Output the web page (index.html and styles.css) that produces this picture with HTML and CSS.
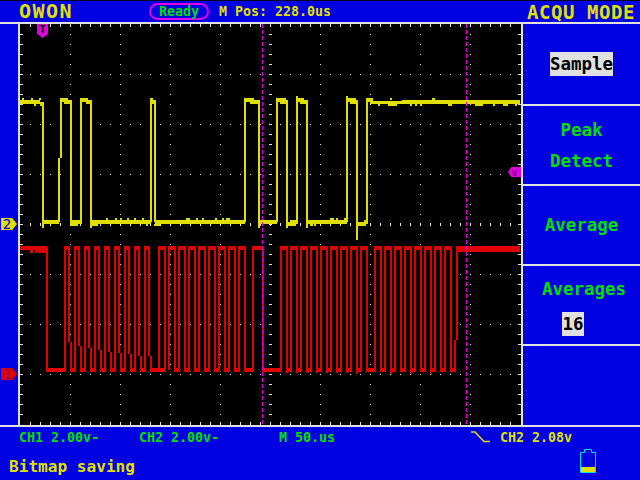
FILE: index.html
```html
<!DOCTYPE html>
<html lang="en">
<head>
  <meta charset="UTF-8">
  <title>OWON oscilloscope - ACQU MODE</title>
  <link rel="stylesheet" href="styles.css">
</head>
<body>

  <div class="scope">

    <div class="top-bar">
      <span class="logo">OWON</span>
      <span class="badge">Ready</span>
      <span class="pos">M Pos: 228.0us</span>
      <span class="menu-title">ACQU MODE</span>
    </div>

    <div class="main">
      <div class="gutter"></div>

      <div class="plot">
        <svg class="trace-view" width="501" height="401" viewBox="20 24 501 401">
          <!-- grid dots -->
          <g class="dots">
            <line x1="30" x2="520" y1="74.5" y2="74.5"/>
            <line x1="30" x2="520" y1="124.5" y2="124.5"/>
            <line x1="30" x2="520" y1="174.5" y2="174.5"/>
            <line x1="30" x2="520" y1="274.5" y2="274.5"/>
            <line x1="30" x2="520" y1="324.5" y2="324.5"/>
            <line x1="30" x2="520" y1="374.5" y2="374.5"/>
            <line x1="70.5" x2="70.5" y1="34" y2="424"/>
            <line x1="120.5" x2="120.5" y1="34" y2="424"/>
            <line x1="170.5" x2="170.5" y1="34" y2="424"/>
            <line x1="220.5" x2="220.5" y1="34" y2="424"/>
            <line x1="320.5" x2="320.5" y1="34" y2="424"/>
            <line x1="370.5" x2="370.5" y1="34" y2="424"/>
            <line x1="420.5" x2="420.5" y1="34" y2="424"/>
            <line x1="470.5" x2="470.5" y1="34" y2="424"/>
          </g>
          <!-- ticks on the frame and on the centre lines -->
          <g class="ticks">
            <line class="tick-x" x1="30" x2="520" y1="25.5" y2="25.5"/>
            <line class="tick-x" x1="30" x2="520" y1="423.5" y2="423.5"/>
            <line class="tick-x" x1="30" x2="520" y1="224.5" y2="224.5"/>
            <line class="tick-y" x1="21.5" x2="21.5" y1="34" y2="424"/>
            <line class="tick-y" x1="519.5" x2="519.5" y1="34" y2="424"/>
            <line class="tick-y" x1="270.5" x2="270.5" y1="34" y2="424"/>
          </g>

          <!-- CH2 -->
          <path class="ch2" d="M43 106V228 M59 222V158 M61 158V98 M71 104V226 M81 224V98 M91 104V228 M151 222V98 M155 104V222 M245 222V98 M259 104V228 M277 222V98 M287 104V228 M297 224V96 M307 104V228 M347 222V96 M357 104V240 M367 224V98"/>
          <path class="ch2-band" d="M20 102H40 M40 104H44 M60 100H68 M64 102H72 M80 100H88 M86 102H92 M150 100H153 M152 102H156 M244 100H254 M250 102H260 M276 100H286 M280 102H288 M296 100H304 M300 102H308 M346 100H356 M350 102H358 M366 100H373 M402 102H520
                                   M43 222H59 M71 222H81 M70 224H78 M91 222H151 M92 224H98 M155 222H245 M259 222H277 M287 224H296 M290 222H298 M307 222H347 M358 224H366 M364 222H368"/>
          <path class="ch2-wide" d="M370 102.5H402"/>
          <path class="ch2-fine" d="M22 99H24 M31 99H33 M39 99H41 M34 105H36 M390 99H392 M432 99H435 M378 105H380 M388 105H397 M410 105H412 M415 105H417 M420 105H422 M448 105H452 M475 105H483 M493 105H495 M503 105H508 M515 105H517
                                    M106 219H108 M115 219H117 M120 219H122 M127 219H129 M134 219H136 M142 219H144 M146 225H148 M154 225H160 M186 219H190 M196 219H198 M202 219H204 M215 219H217 M222 219H224 M226 219H230 M330 219H334 M336 219H338 M344 219H346 M310 225H313 M314 225H316"/>

          <!-- CH1 -->
          <path class="ch1" d="M47 248V370
            M65 370V248 M69 248V342 M71 342V372
            M75 370V248 M79 248V346 M81 346V372
            M85 370V248 M89 248V348 M91 348V372
            M95 370V248 M99 248V350 M101 350V372
            M105 370V248 M109 248V352 M111 352V372
            M115 370V248 M119 248V353 M121 353V372
            M125 370V248 M129 248V354 M131 354V372
            M135 370V248 M139 248V356 M141 356V372
            M145 370V248 M149 248V356 M151 356V372
            M159 370V248 M165 248V372 M169 370V248 M175 248V372 M179 370V248 M185 248V372 M189 370V248 M195 248V372
            M199 370V248 M205 248V372 M209 370V248 M215 248V372 M219 370V248 M225 248V372 M229 370V248 M235 248V372
            M239 370V248 M245 248V372 M253 370V248 M263 248V372
            M281 370V248 M287 248V373 M291 370V248 M297 248V373 M301 370V248 M307 248V373 M311 370V248 M317 248V373
            M321 370V248 M327 248V373 M331 370V248 M337 248V373 M341 370V248 M347 248V373 M351 370V248 M357 248V374
            M361 370V248 M367 248V372 M375 370V248 M381 248V372 M385 370V248 M391 248V374 M395 370V248 M401 248V372
            M405 370V248 M411 248V374 M415 370V248 M421 248V372 M425 370V248 M431 248V374 M435 370V248 M441 248V372
            M445 370V248 M451 248V372 M455 370V340 M457 340V248"/>
          <path class="ch1-band" d="M20 248H47 M30 251H33 M35 251H37 M38 251H47
            M64 248H70 M74 248H80 M84 248H90 M94 248H100 M104 248H110 M114 248H120 M124 248H130 M134 248H140 M144 248H150 M158 248H166 M168 248H176
            M178 248H186 M188 248H196 M198 248H206 M208 248H216 M218 248H226 M228 248H236 M238 248H246 M252 248H264
            M280 248H288 M290 248H298 M300 248H308 M310 248H318 M320 248H328 M330 248H338 M340 248H348 M350 248H358 M360 248H368
            M374 248H382 M384 248H392 M394 248H402 M404 248H412 M414 248H422 M424 248H432 M434 248H442 M444 248H452
            M46 370H66 M70 370H76 M80 370H86 M90 370H96 M100 370H106 M110 370H116 M120 370H126 M130 370H136 M140 370H146 M150 370H166
            M174 370H180 M184 370H190 M194 370H200 M204 370H210 M214 370H220 M224 370H230 M234 370H240 M244 370H254
            M262 370H282 M286 370H292 M296 370H302 M306 370H312 M316 370H322 M326 370H332 M336 370H342 M346 370H352 M356 370H362
            M366 370H376 M380 370H386 M390 370H396 M400 370H406 M410 370H416 M420 370H426 M430 370H436 M440 370H446 M450 370H456"/>
          <path class="ch1-wide" d="M456 249H520"/>

          <!-- cursors -->
          <line class="cursor" x1="262.5" x2="262.5" y1="24" y2="425"/>
          <line class="cursor" x1="466.5" x2="466.5" y1="24" y2="425"/>
        </svg>
      </div>

      <div class="menu">
        <div class="menu-item"><span class="selected">Sample</span></div>
        <div class="menu-item menu-item-two">
          <span>Peak</span>
          <span>Detect</span>
        </div>
        <div class="menu-item"><span>Average</span></div>
        <div class="menu-item menu-item-value">
          <span>Averages</span>
          <span class="selected value">16</span>
        </div>
        <div class="menu-item menu-item-blank"></div>
      </div>

      <span class="marker marker-trigger">T</span>
      <span class="marker marker-level">v</span>
      <span class="marker marker-ch marker-ch2">2</span>
      <span class="marker marker-ch marker-ch1">1</span>
    </div>

    <div class="status">
      <span class="status-ch">CH1 2.00v-</span>
      <span class="status-ch2">CH2 2.00v-</span>
      <span class="status-time">M 50.us</span>
      <svg class="slope" width="19" height="12" viewBox="0 0 19 12">
        <path d="M0 1H4L13 10.5H19"/>
      </svg>
      <span class="status-trigger">CH2 2.08v</span>
    </div>

    <div class="message">
      <span class="message-text">Bitmap saving</span>
      <svg class="battery" width="16" height="24" viewBox="0 0 16 24">
        <rect class="battery-fill" x="1" y="18" width="14" height="5"/>
        <path class="battery-line" d="M.5 23.5V3.5H4.5V.5H11.5V3.5H15.5V23.5Z"/>
      </svg>
    </div>

  </div>

</body>
</html>
```

FILE: styles.css
```css
:root {
  --blue: #0000e0;
  --yellow: #e0e000;
  --green: #00e000;
  --red: #e00000;
  --magenta: #e000e0;
  --line: #e0e0e0;
}

body {
  margin: 0;
  background-color: var(--blue);
  font-family: 'DejaVu Sans Mono', monospace;
}

.scope {
  width: 640px;
  height: 480px;
  overflow: hidden;
  border-top: 1px solid #000020;
  box-sizing: border-box;
  background-color: var(--blue);
  display: flex;
  flex-direction: column;
}

.top-bar {
  height: 21px;
  display: flex;
  align-items: center;
  padding-left: 19px;
  color: var(--yellow);
}

.logo {
  width: 130px;
  font-size: 20px;
  line-height: 21px;
  font-weight: bold;
  letter-spacing: 1.5px;
}

.badge {
  width: 56px;
  height: 13px;
  border: 2px solid var(--magenta);
  border-radius: 9px;
  color: var(--green);
  font-size: 13.29px;
  font-weight: bold;
  line-height: 13px;
  text-align: center;
}

.pos {
  margin-left: 10px;
  font-size: 13.29px;
  font-weight: bold;
}

.menu-title {
  margin-left: auto;
  padding-right: 5px;
  font-size: 19px;
  font-weight: bold;
  letter-spacing: 0.56px;
}

.main {
  position: relative;
  height: 401px;
  display: flex;
  border-top: 2px solid var(--line);
  border-bottom: 2px solid var(--line);
}

.gutter {
  width: 18px;
}

.plot {
  width: 501px;
  height: 401px;
  background-color: #000;
  border-left: 2px solid var(--line);
  border-right: 2px solid var(--line);
}

.trace-view {
  display: block;
}

.dots line {
  stroke: var(--line);
  stroke-width: 1;
  stroke-dasharray: 1 9;
}

.ticks line {
  stroke: var(--line);
}

.tick-x {
  stroke-width: 3;
  stroke-dasharray: 1 9;
}

.tick-y {
  stroke-width: 3;
  stroke-dasharray: 1 9;
}

.trace-view path {
  fill: none;
  shape-rendering: crispEdges;
}

.ch2 { stroke: var(--yellow); stroke-width: 2; }
.ch2-band { stroke: var(--yellow); stroke-width: 4; }
.ch2-wide { stroke: var(--yellow); stroke-width: 3; }
.ch2-fine { stroke: var(--yellow); stroke-width: 2; }
.ch1 { stroke: var(--red); stroke-width: 2; }
.ch1-band { stroke: var(--red); stroke-width: 4; }
.ch1-wide { stroke: var(--red); stroke-width: 6; }

.cursor {
  stroke: var(--magenta);
  stroke-width: 1;
  stroke-dasharray: 4 2;
}

.menu {
  flex: 1;
  display: grid;
  grid-template-rows: 82px 80px 80px 80px 1fr;
  color: var(--green);
  font-size: 17.44px;
  font-weight: bold;
  line-height: 20px;
}

.menu-item {
  display: flex;
  flex-direction: column;
  align-items: center;
  justify-content: center;
  box-sizing: border-box;
  border-bottom: 2px solid var(--line);
}

.menu-item-two {
  gap: 11px;
}

.menu-item-value {
  justify-content: flex-start;
  align-items: flex-start;
  gap: 13px;
  padding-left: 19px;
  padding-top: 13px;
}

.menu-item-blank {
  border-bottom: none;
}

.selected {
  background-color: var(--line);
  color: #000;
  line-height: 24px;
}

.value {
  margin-left: 20px;
  padding: 0 0.5px;
}

.marker {
  position: absolute;
  display: flex;
  align-items: center;
  justify-content: center;
  font-weight: bold;
}

.marker-trigger {
  left: 37px;
  top: 0;
  width: 11px;
  height: 14px;
  background-color: var(--magenta);
  clip-path: polygon(0 0, 100% 0, 100% 70%, 50% 100%, 0 70%);
  color: #000;
  font-size: 11px;
  line-height: 11px;
  align-items: flex-start;
}

.marker-level {
  left: 508px;
  top: 143px;
  width: 13px;
  height: 10px;
  background-color: var(--magenta);
  clip-path: polygon(0 50%, 25% 0, 100% 0, 100% 100%, 25% 100%);
  color: #800080;
  font-size: 10px;
}

.marker-ch {
  left: 1px;
  width: 16px;
  height: 12px;
  clip-path: polygon(0 0, 70% 0, 100% 50%, 70% 100%, 0 100%);
  font-size: 14px;
  line-height: 12px;
  font-weight: normal;
  padding-right: 4px;
  box-sizing: border-box;
}

.marker-ch2 {
  top: 194px;
  background-color: var(--yellow);
  color: var(--blue);
}

.marker-ch1 {
  top: 344px;
  background-color: var(--red);
  color: #800060;
}

.status {
  height: 20px;
  display: flex;
  align-items: center;
  padding-left: 19px;
  font-size: 13.29px;
  font-weight: bold;
  color: var(--green);
}

.status-ch { width: 120px; }
.status-ch2 { width: 140px; }
.status-time { width: 192px; }

.slope {
  width: 19px;
  margin-right: 10px;
}

.slope path {
  fill: none;
  stroke: var(--yellow);
  stroke-width: 1.5;
}

.status-trigger {
  color: var(--yellow);
}

.message {
  flex: 1;
  display: flex;
  align-items: flex-start;
  padding-left: 9px;
}

.message-text {
  margin-top: 10px;
  font-size: 16.1px;
  font-weight: bold;
  color: var(--yellow);
}

.battery {
  margin-left: 445px;
  margin-top: 2px;
}

.battery-fill {
  fill: var(--yellow);
}

.battery-line {
  fill: none;
  stroke: #00e0e0;
}
```
